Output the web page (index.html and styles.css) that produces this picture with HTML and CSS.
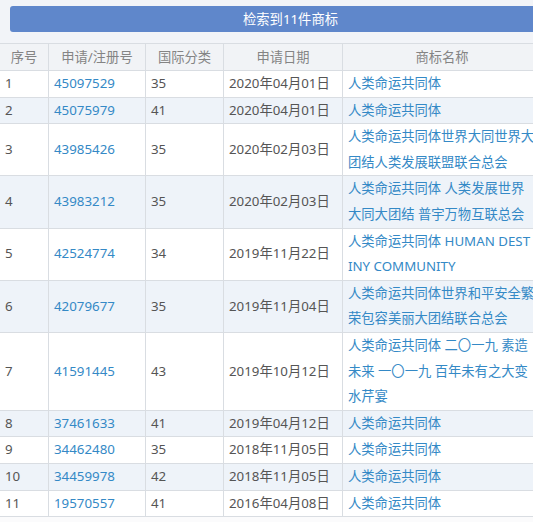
FILE: index.html
```html
<!DOCTYPE html>
<html lang="zh-CN">
<head>
<meta charset="utf-8">
<title>检索结果</title>
<link rel="stylesheet" href="styles.css">
</head>
<body>
<div class="page">
  <div class="top">
    <div class="result-bar">检索到11件商标</div>
  </div>
  <table class="tm-table">
    <colgroup>
      <col class="c-no"><col class="c-reg"><col class="c-cls"><col class="c-date"><col class="c-name">
    </colgroup>
    <thead>
      <tr><th>序号</th><th>申请/注册号</th><th>国际分类</th><th>申请日期</th><th>商标名称</th></tr>
    </thead>
    <tbody>
      <tr><td>1</td><td class="link">45097529</td><td>35</td><td>2020年04月01日</td><td class="link">人类命运共同体</td></tr>
      <tr><td>2</td><td class="link">45075979</td><td>41</td><td>2020年04月01日</td><td class="link">人类命运共同体</td></tr>
      <tr><td>3</td><td class="link">43985426</td><td>35</td><td>2020年02月03日</td><td class="link">人类命运共同体世界大同世界大<br>团结人类发展联盟联合总会</td></tr>
      <tr><td>4</td><td class="link">43983212</td><td>35</td><td>2020年02月03日</td><td class="link">人类命运共同体 人类发展世界<br>大同大团结 普宇万物互联总会</td></tr>
      <tr><td>5</td><td class="link">42524774</td><td>34</td><td>2019年11月22日</td><td class="link">人类命运共同体 HUMAN DEST<br>INY COMMUNITY</td></tr>
      <tr><td>6</td><td class="link">42079677</td><td>35</td><td>2019年11月04日</td><td class="link">人类命运共同体世界和平安全繁<br>荣包容美丽大团结联合总会</td></tr>
      <tr><td>7</td><td class="link">41591445</td><td>43</td><td>2019年10月12日</td><td class="link">人类命运共同体 二〇一九 素造<br>未来 一〇一九 百年未有之大变<br>水芹宴</td></tr>
      <tr><td>8</td><td class="link">37461633</td><td>41</td><td>2019年04月12日</td><td class="link">人类命运共同体</td></tr>
      <tr><td>9</td><td class="link">34462480</td><td>35</td><td>2018年11月05日</td><td class="link">人类命运共同体</td></tr>
      <tr><td>10</td><td class="link">34459978</td><td>42</td><td>2018年11月05日</td><td class="link">人类命运共同体</td></tr>
      <tr><td>11</td><td class="link">19570557</td><td>41</td><td>2016年04月08日</td><td class="link">人类命运共同体</td></tr>
    </tbody>
  </table>
</div>
</body>
</html>
```
FILE: styles.css
```css
html, body {
  margin: 0;
  padding: 0;
  overflow: hidden;
  background: #fbfbfc;
}
body {
  font-family: "Noto Sans", "Noto Sans CJK SC", sans-serif;
  font-size: 13.3px;
  color: #555;
}
.page {
  width: 600px;
}
.top {
  background: #f2f4f8;
  padding: 6px 0 11px 10px;
}
.result-bar {
  width: 561px;
  height: 26px;
  line-height: 26px;
  background: #5f87cb;
  border-radius: 3px;
  color: #fff;
  text-align: center;
}
.tm-table {
  border-collapse: collapse;
  table-layout: fixed;
  width: 542px;
  margin-left: -1px;
  background: #fff;
}
.c-no { width: 49px; }
.c-reg { width: 97px; }
.c-cls { width: 78px; }
.c-date { width: 119px; }
.c-name { width: 199px; }
.tm-table th,
.tm-table td {
  border: 1px solid #d9dde2;
  padding: 0 5px;
  white-space: nowrap;
  overflow: hidden;
  vertical-align: middle;
}
.tm-table th {
  background: #f1f3f6;
  color: #848484;
  font-weight: normal;
  text-align: center;
  line-height: 26px;
}
.tm-table td {
  text-align: left;
  line-height: 25.6px;
}
.tm-table tbody tr:nth-child(even) td {
  background: #eef3f9;
}
.tm-table td.link {
  color: #3489c6;
}
```
